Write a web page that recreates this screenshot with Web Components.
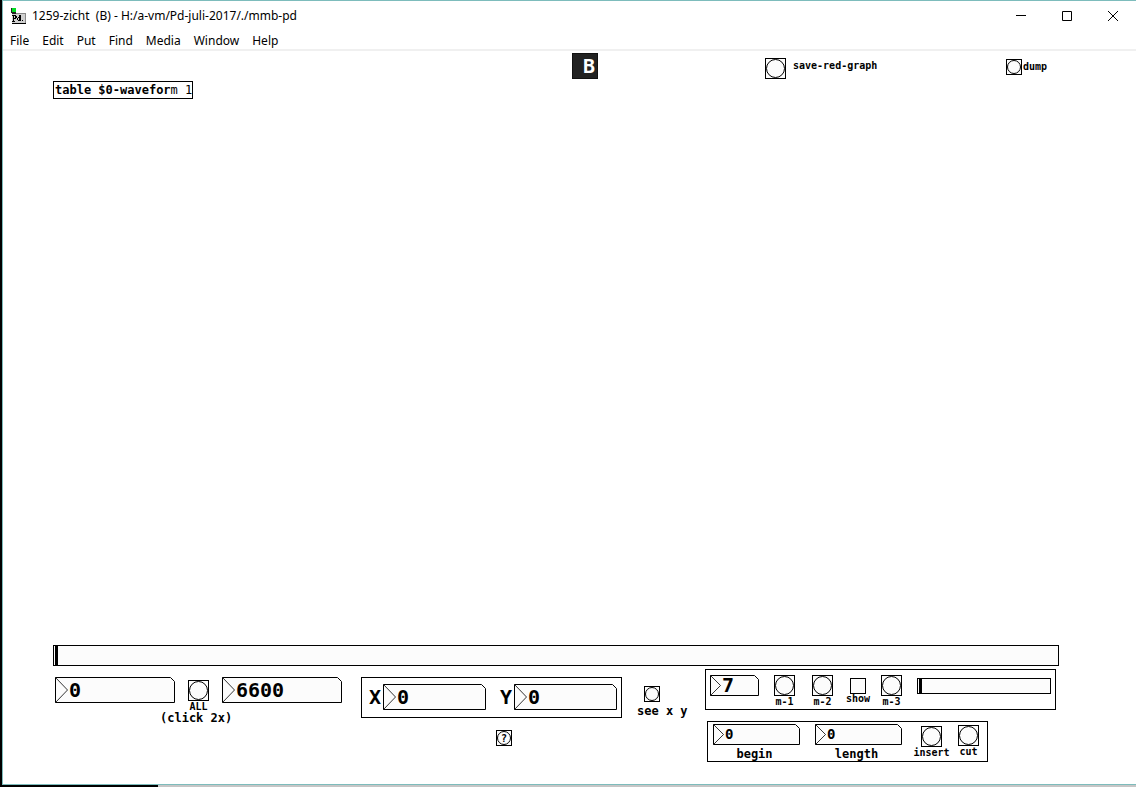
<!DOCTYPE html>
<html lang="en">
<head>
<meta charset="utf-8">
<title>1259-zicht (B) - H:/a-vm/Pd-juli-2017/./mmb-pd</title>
<style>
  body { margin: 0; background: #000; }
</style>
</head>
<body>
<pd-window>
  <pd-titlebar slot="title">1259-zicht&nbsp; (B) - H:/a-vm/Pd-juli-2017/./mmb-pd</pd-titlebar>
  <pd-menubar slot="menu" items="File,Edit,Put,Find,Media,Window,Help"></pd-menubar>
  <pd-canvas>
    <pd-object x="50" y="30">table $0-wavefor<span style="font-weight:400">m 1</span></pd-object>
    <pd-badge x="569" y="2">B</pd-badge>
    <pd-bang x="762" y="7" size="21" label="save-red-graph" side="right" gap="7"></pd-bang>
    <pd-bang x="1003" y="8" size="16" label="dump" side="right" gap="1"></pd-bang>

    <pd-slider x="50" y="594" width="1006" height="21" name="position"></pd-slider>
    <pd-number x="52" y="626" width="120" height="26" value="0" name="start"></pd-number>
    <pd-bang x="185" y="629" size="21" label="ALL"></pd-bang>
    <pd-number x="219" y="626" width="120" height="26" value="6600" name="end"></pd-number>
    <pd-comment x="157" y="660">(click 2x)</pd-comment>

    <pd-panel x="358" y="626" width="261" height="41" style="--pad:6px 4px 0 7px">
      <pd-number width="103" height="26" value="0" label="X"></pd-number>
      <pd-number width="103" height="26" value="0" label="Y" style="margin-left:auto"></pd-number>
    </pd-panel>
    <pd-bang x="641" y="635" size="16" name="see x y"></pd-bang>
    <pd-comment x="634" y="653">see x y</pd-comment>
    <pd-bang x="493" y="679" size="16" name="help" mark="?"></pd-bang>

    <pd-panel x="702" y="618" width="351" height="41" style="--pad:5px 4px 0 4px;--gap:15px">
      <pd-number width="49" height="21" value="7" font="20" name="marker"></pd-number>
      <pd-bang size="21" label="m-1"></pd-bang>
      <pd-bang size="21" label="m-2" style="margin-left:2px"></pd-bang>
      <pd-toggle label="show" style="margin:3px 0 0 2px"></pd-toggle>
      <pd-bang size="21" label="m-3"></pd-bang>
      <pd-slider width="134" height="16" name="marker position" style="margin-top:3px"></pd-slider>
    </pd-panel>

    <pd-panel x="704" y="670" width="281" height="41" style="--pad:2px 8px 0 5px;--gap:15px">
      <pd-number width="87" height="21" value="0" caption="begin"></pd-number>
      <pd-number width="87" height="21" value="0" caption="length"></pd-number>
      <pd-bang size="21" label="insert" style="margin:2px 1px 0 4px"></pd-bang>
      <pd-bang size="21" label="cut" style="margin:1px 0 0 0"></pd-bang>
    </pd-panel>
  </pd-canvas>
</pd-window>

<script>
const MONO = '"DejaVu Sans Mono", "Liberation Mono", monospace';
const UI = '"Noto Sans", "Open Sans", sans-serif';

class PdElement extends HTMLElement {
  connectedCallback() {
    if (this.shadowRoot) return;
    this.attachShadow({ mode: 'open' }).innerHTML =
      `<style>*{box-sizing:border-box}:host{box-sizing:border-box}</style>${this.render()}`;
  }
  num(name, fallback = 0) { return Number(this.getAttribute(name) ?? fallback); }
  text(name) { return this.getAttribute(name) ?? ''; }
  /* Objects that carry x/y are nodes placed freely on the patch canvas. */
  place() {
    return this.hasAttribute('x')
      ? `:host{position:absolute;left:${this.num('x')}px;top:${this.num('y')}px}` : '';
  }
}

customElements.define('pd-window', class extends PdElement {
  render() {
    return `<style>
      :host{display:flex;flex-direction:column;min-height:100vh;padding-left:2px;background:#000}
      main{flex:1;display:flex;flex-direction:column;background:#fff;
        border:1px solid #7dbcbc;border-right:0}
      .below{display:flex;height:2px;background:#c6c6c6}
      .below i{width:156px;background:#000}
    </style>
    <main><slot name="title"></slot><slot name="menu"></slot><slot></slot></main>
    <div class="below"><i></i></div>`;
  }
});

customElements.define('pd-titlebar', class extends PdElement {
  render() {
    return `<style>
      :host{display:flex;align-items:center;height:30px;padding-left:8px;
        font:12px/16px ${UI};color:#000}
      h1{flex:1;margin:0 0 0 5px;font:inherit;white-space:pre}
      button{width:46px;height:30px;padding:0;border:0;background:none;display:grid;place-items:center}
      svg{display:block}
    </style>
    <svg width="16" height="16" viewBox="0 0 16 16" shape-rendering="crispEdges" aria-hidden="true">
      <path fill="#222" d="M0 0h5v5H0z"/><path fill="#0d2" d="M1 0h4v4H1z"/>
      <path fill="#222" d="M1 4h4v2H1z"/>
      <path fill="#d0d0d0" d="M1 6h14v9H1z"/><path fill="#888" d="M5 5h10v1H5zM14 6h1v9h-1z"/>
      <path fill="#000" d="M1 7h4v1H4v0h2v2H5v1H3v2h1v1H1v-1h1V8H1zM3 8v2h1V8zM8 7h2v6H7v-1H6v-2h1V9h1zM7 10v2h1v-2zM11 12h1v1h-1zM1 15h14v1H1z"/>
    </svg>
    <h1><slot></slot></h1>
    <button aria-label="Minimize"><svg width="10" height="10"><path d="M0 4.5h10" stroke="#000"/></svg></button>
    <button aria-label="Maximize"><svg width="10" height="10"><path d="M.5.5h9v9h-9z" fill="none" stroke="#000"/></svg></button>
    <button aria-label="Close"><svg width="10" height="10"><path d="M0 0l10 10M10 0L0 10" stroke="#000"/></svg></button>`;
  }
});

customElements.define('pd-menubar', class extends PdElement {
  render() {
    const items = this.text('items').split(',').map(t => `<button>${t}</button>`).join('');
    return `<style>
      :host{display:block;border-bottom:2px solid #f0f0f0}
      nav{display:flex;gap:13px;height:18px;padding-left:7px}
      button{padding:0;border:0;background:none;font:12px/20px ${UI};color:#000}
    </style><nav>${items}</nav>`;
  }
});

customElements.define('pd-canvas', class extends PdElement {
  render() {
    return `<style>:host{display:block;position:relative;flex:1;min-height:720px;
      font:bold 12px/14px ${MONO};color:#000}</style><slot></slot>`;
  }
});

customElements.define('pd-object', class extends PdElement {
  render() {
    return `<style>${this.place()}
      :host{display:block;padding:1px 0 1px 1px;border:1px solid #000;font:bold 12px/14px ${MONO};white-space:pre}
    </style><slot></slot>`;
  }
});

customElements.define('pd-comment', class extends PdElement {
  render() {
    return `<style>${this.place()}
      :host{display:block;font:bold 12px/14px ${MONO};white-space:pre}
    </style><slot></slot>`;
  }
});

customElements.define('pd-badge', class extends PdElement {
  render() {
    return `<style>${this.place()}
      :host{display:block;width:26px;height:26px;padding-left:10px;border:1px solid #111;
        background:#222;color:#fff;font:bold 20px/24px ${MONO}}
    </style><slot></slot>`;
  }
});

customElements.define('pd-panel', class extends PdElement {
  render() {
    return `<style>${this.place()}
      :host{display:flex;align-items:flex-start;gap:var(--gap,0);
        width:${this.num('width')}px;height:${this.num('height')}px;
        padding:var(--pad);border:1px solid #000}
    </style><slot></slot>`;
  }
});

customElements.define('pd-bang', class extends PdElement {
  render() {
    const s = this.num('size'), r = (s - 2) / 2, label = this.text('label');
    const right = this.text('side') === 'right';
    return `<style>${this.place()}
      :host{display:flex;flex-direction:${right ? 'row' : 'column'};align-items:center;
        width:${s}px;height:${s}px;font:bold 10px/11px ${MONO}}
      button{flex:none;display:grid;width:${s}px;height:${s}px;padding:0;
        border:1px solid #000;background:#fcfcfc;color:#000;font:inherit}
      button>*{grid-area:1/1;place-self:center}
      label{flex:none;white-space:pre;margin-left:${right ? this.num('gap') : 0}px;
        ${right ? 'padding-bottom:' + (s > 16 ? 6 : 2) + 'px' : ''}}
    </style>
    <button id="b" aria-label="${label || this.text('name')}">
      <svg width="${s - 2}" height="${s - 2}"><circle cx="${r}" cy="${r}" r="${r - .5}" fill="none" stroke="#000"/></svg>
      ${this.hasAttribute('mark') ? `<span>${this.text('mark')}</span>` : ''}
    </button>${label ? `<label for="b">${label}</label>` : ''}`;
  }
});

customElements.define('pd-toggle', class extends PdElement {
  render() {
    return `<style>${this.place()}
      :host{display:flex;flex-direction:column;align-items:center;width:16px;height:16px;
        font:bold 10px/10px ${MONO}}
      input{appearance:none;flex:none;width:16px;height:16px;margin:0;border:1px solid #000;background:#fcfcfc}
    </style><input type="checkbox" id="t"><label for="t">${this.text('label')}</label>`;
  }
});

customElements.define('pd-number', class extends PdElement {
  render() {
    const w = this.num('width'), h = this.num('height'), tip = h > 21 ? 12 : 10;
    const font = this.num('font', h > 21 ? 20 : 14);
    const label = this.text('label'), caption = this.text('caption');
    return `<style>${this.place()}
      :host{display:flex;font:bold 20px/26px ${MONO}}
      .label{margin-right:2px}
      .col{display:flex;flex-direction:column;align-items:center;width:${w}px}
      .box{display:grid;width:${w}px;height:${h}px}
      .box>*{grid-area:1/1}
      input{width:${w - 6}px;height:${h}px;margin:0;padding:0 0 0 ${tip + 2}px;border:0;
        background:none;color:#000;font:bold ${font}px/${h}px ${MONO}}
      .caption{padding-right:4px;font:bold 12px/18px ${MONO}}
    </style>
    ${label ? `<label class="label" for="n">${label}</label>` : ''}
    <div class="col"><div class="box">
      <svg width="${w}" height="${h}" aria-hidden="true">
        <path d="M.5.5H${w - 4.5}l4 4V${h - .5}H.5z" fill="#fcfcfc" stroke="#000"/>
        <path d="M.5.5L${tip + .5} ${h / 2}L.5 ${h - .5}" fill="none" stroke="#000" stroke-width=".8"/>
      </svg>
      <input id="n" value="${this.text('value')}" inputmode="numeric"${label || caption ? '' : ` aria-label="${this.text('name')}"`}>
    </div>${caption ? `<label class="caption" for="n">${caption}</label>` : ''}</div>`;
  }
});

customElements.define('pd-slider', class extends PdElement {
  render() {
    const w = this.num('width'), h = this.num('height');
    return `<style>${this.place()}
      :host{display:block}
      input{appearance:none;display:block;width:${w}px;height:${h}px;margin:0;padding:0 1px;
        border:1px solid #000;background:#fcfcfc}
      input::-webkit-slider-runnable-track{height:${h - 2}px}
      input::-webkit-slider-thumb{appearance:none;width:3px;height:${h - 2}px;background:#000}
      input::-moz-range-thumb{width:3px;height:${h - 2}px;border:0;border-radius:0;background:#000}
    </style><input type="range" min="0" max="127" value="0" aria-label="${this.text('name')}">`;
  }
});
</script>
</body>
</html>
